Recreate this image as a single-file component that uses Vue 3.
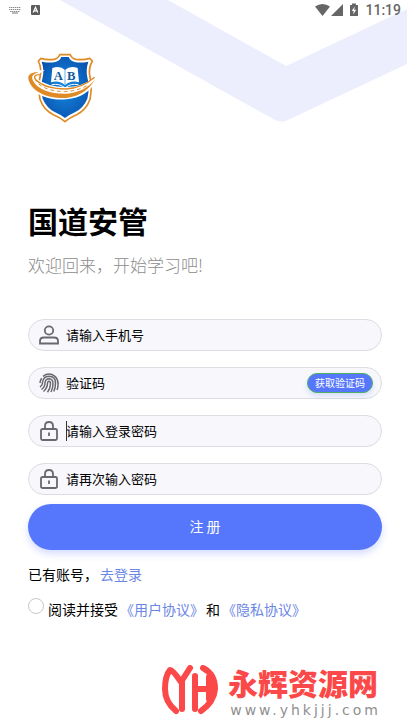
<template>
  <div class="page">
    <svg class="backdrop" viewBox="0 0 407 124" aria-hidden="true">
      <path d="M60 0H168L286 66L407 9V64L288 120Q282 123 275 120Z" fill="#eceefe" />
    </svg>

    <header class="status-bar">
      <div class="status-group">
        <svg width="12" height="8" viewBox="0 0 12 8" aria-hidden="true">
          <path d="M0 1.500H12M0 3.500H12M1 5.500H11" stroke="#888" stroke-width="1" stroke-dasharray="1.4 .6" />
          <path d="M3 7H9" stroke="#777" />
        </svg>
        <svg width="9" height="10" viewBox="0 0 9 10" aria-hidden="true">
          <rect width="9" height="10" rx="1" fill="#5c5c5c" />
          <path d="M2.2 7.5L4.5 2.2L6.8 7.5M3 5.8H6" fill="none" stroke="#fff" stroke-width="1.2" />
        </svg>
      </div>
      <div class="status-group status-right">
        <svg width="44" height="14" viewBox="0 0 44 14" aria-hidden="true">
          <path d="M0 3.500Q7.500 -1.500 15 3.500L7.500 13Z" fill="#666" />
          <path d="M28 1V13H16Z" fill="#666" />
          <path d="M37 .5H41V2H43V13H35V2H37Z" fill="#666" />
          <path d="M39.600 3.500L36.800 8H38.700L38.200 11.500L41.200 6.800H39.200Z" fill="#fff" />
        </svg>
        <time class="clock">11:19</time>
      </div>
    </header>

    <main class="content">
      <svg class="logo" viewBox="24 15 204 210" role="img" aria-label="国道安管">
        <defs>
          <radialGradient id="shieldFill" cx="50%" cy="50%" r="60%">
            <stop offset="0" stop-color="#1389e0" />
            <stop offset="1" stop-color="#0a52ae" />
          </radialGradient>
        </defs>
        <path
          d="M119 20H151Q155 31 168 34Q190 37 209 31L217 39Q204 62 210 88Q217 112 210 154Q199 186 170 200Q148 209 135 221Q122 209 100 200Q71 186 60 154Q53 112 60 88Q66 62 55 39L63 31Q82 37 102 34Q115 31 119 20Z"
          fill="#fff"
          stroke="#df8a25"
          stroke-width="5"
          stroke-linejoin="round"
        />
        <path
          d="M124 27H146Q151 40 167 43Q187 45 205 41Q197 65 202 88Q210 118 202 152Q190 180 166 192Q148 200 135 210Q122 200 104 192Q80 180 68 152Q60 118 68 88Q73 65 65 41Q85 45 103 43Q119 40 124 27Z"
          fill="url(#shieldFill)"
        />
        <path
          d="M135 66Q120 51 97 60L93 103Q119 96 135 112Q151 96 177 103L173 60Q150 51 135 66Z"
          fill="#fff"
        />
        <path
          d="M135 66V111M93 106Q119 100 133 115M177 106Q151 100 137 115"
          fill="none"
          stroke="#2385ce"
          stroke-width="2"
        />
        <path d="M95 110Q119 106 132 118M175 110Q151 106 138 118" fill="none" stroke="#fff" stroke-width="3" />
        <text class="logo-letter" x="115" y="95">A</text>
        <text class="logo-letter" x="154" y="95">B</text>
        <path
          d="M56 72C32 72 22 82 28 100C39 137 93 153 139 149C184 145 211 122 225 94C199 113 174 122 139 122C91 123 64 108 48 96Q37 83 56 72Z"
          fill="#fff"
          stroke="#fff"
          stroke-width="10"
        />
        <path
          d="M56 73C30 71 20 83 27 100C41 137 93 153 139 150C181 146 211 121 225 94C207 119 174 136 139 137C92 138 58 125 43 104C30 87 38 78 56 73Z"
          fill="#df8a25"
        />
        <path
          d="M59 80Q35 80 49 97Q76 123 137 123Q184 122 224 88"
          fill="none"
          stroke="#df8a25"
          stroke-width="4"
        />
        <path
          d="M45 91Q60 128 134 131Q176 129 207 109"
          fill="none"
          stroke="#df8a25"
          stroke-width="3"
          stroke-dasharray="11 9"
        />
      </svg>

      <h1 class="title">国道安管</h1>
      <p class="subtitle">欢迎回来，开始学习吧!</p>

      <form class="form" @submit.prevent>
        <div v-for="field in fields" :key="field.id" class="field">
          <label class="field-icon" :for="field.id" :aria-label="field.label">
            <svg v-if="field.icon === 'user'" width="20" height="20" viewBox="0 0 20 20">
              <circle cx="10" cy="5.500" r="4.200" />
              <path d="M1 18.500V16Q1 12.500 5 12.500H15Q19 12.500 19 16V18.500Z" />
            </svg>
            <svg v-else-if="field.icon === 'finger'" class="finger" width="20" height="20" viewBox="0 0 20 20">
              <path d="M4 3.300Q10-1.200 16 3.300Q19.500 7 19 12Q19 15 18 17" />
              <path d="M1 10Q1.300 7 2.600 5.200M1 14Q3.500 12.500 3.500 9.500Q4 3.500 10 3.300Q16.500 3.500 16.500 10Q16.500 15 14.800 18.500" />
              <path d="M2.500 16.500Q6 14 6 9.500Q6.500 6 10 5.800Q14 6 14 10.500Q14 15 12 19" />
              <path d="M4.500 18.500Q8.500 15 8.500 10Q8.700 8.300 10 8.300Q11.500 8.500 11.500 11Q11.300 15.500 8.500 19.300" />
            </svg>
            <svg v-else width="20" height="20" viewBox="0 0 20 20">
              <rect x="2" y="8" width="16" height="11" rx="1.500" />
              <path d="M6 8V5Q6 1 10 1Q14 1 14 5V8M10 11.500V15" />
            </svg>
          </label>
          <div class="input-wrap">
            <input
              :id="field.id"
              v-model="form[field.id]"
              class="field-input"
              :type="field.type"
              :placeholder="field.label"
            />
            <span v-if="field.id === active" class="caret"></span>
          </div>
          <button v-if="field.icon === 'finger'" type="button" class="code-btn">获取验证码</button>
        </div>

        <button type="submit" class="submit-btn">注 册</button>
      </form>

      <p class="row login-row">
        <span>已有账号，</span>
        <a href="#login">去登录</a>
      </p>

      <div class="row agree-row">
        <input id="agree" v-model="agreed" class="agree-radio" type="checkbox" />
        <label for="agree">阅读并接受</label>
        <a href="#terms">《用户协议》</a>
        <span>和</span>
        <a href="#privacy">《隐私协议》</a>
      </div>
    </main>

    <footer class="brand">
      <svg width="56" height="50" viewBox="0 0 56 50" aria-hidden="true">
        <g fill="none" stroke="#fb4848" stroke-width="6" stroke-linecap="round" stroke-linejoin="round">
          <path d="M14 46Q3 37 3 24Q3 11 8 5Q11 5 19 17L28 3" />
          <path d="M20 17V44" />
          <path d="M33 11V44M33 24H47M47 12V34" />
          <path d="M41 3Q53 9 53 24Q52 37 39 46" />
        </g>
      </svg>
      <div class="brand-text">
        <strong class="brand-name">永辉资源网</strong>
        <span class="brand-url">www.yhkjjj.com</span>
      </div>
    </footer>
  </div>
</template>

<script setup>
import { reactive, ref } from 'vue'

const fields = [
  { id: 'phone', label: '请输入手机号', type: 'tel', icon: 'user' },
  { id: 'code', label: '验证码', type: 'text', icon: 'finger' },
  { id: 'password', label: '请输入登录密码', type: 'password', icon: 'lock' },
  { id: 'confirm', label: '请再次输入密码', type: 'password', icon: 'lock' }
]

const form = reactive({ phone: '', code: '', password: '', confirm: '' })
const active = ref('password')
const agreed = ref(false)
</script>

<style>
body {
  margin: 0;
  background: #fff;
}
</style>

<style scoped>
.page {
  position: relative;
  display: flex;
  flex-direction: column;
  min-height: 100vh;
  box-sizing: border-box;
  font-family: "Noto Sans CJK SC", sans-serif;
  color: #000;
}

.backdrop {
  position: absolute;
  top: 0;
  left: 0;
  width: 100%;
}

.status-bar {
  position: relative;
  display: flex;
  justify-content: space-between;
  align-items: center;
  height: 20px;
  padding: 0 6px 0 9px;
}

.status-group {
  display: flex;
  align-items: center;
  gap: 10px;
}

.status-right {
  gap: 6px;
}

.clock {
  font: 500 14px/20px Roboto, sans-serif;
  color: #666;
}

.content {
  position: relative;
  padding: 33px 25px 0 28px;
}

.logo {
  display: block;
  width: 68px;
  height: 70px;
}

.logo-letter {
  font: bold 38px "Liberation Serif", serif;
  fill: #145a9c;
  text-anchor: middle;
}

.title {
  margin: 75px 0 0;
  font-size: 30px;
  line-height: 44px;
  font-weight: 700;
}

.subtitle {
  margin: 11px 0 0;
  font-size: 17px;
  line-height: 24px;
  font-weight: 300;
  color: #8c8c8c;
}

.form {
  display: flex;
  flex-direction: column;
  gap: 16px;
  margin-top: 42px;
}

.field {
  display: flex;
  align-items: center;
  height: 32px;
  box-sizing: border-box;
  padding: 0 8px 0 10px;
  background: #f7f7fc;
  border: 1px solid #dcdce2;
  border-radius: 16px;
}

.field-icon {
  display: flex;
  margin-right: 7px;
}

.field-icon svg {
  fill: none;
  stroke: #68686e;
  stroke-width: 1.8;
}

.field-icon .finger {
  stroke-width: 1.5;
}

.input-wrap {
  position: relative;
  display: flex;
  flex: 1;
  min-width: 0;
}

.field-input {
  width: 100%;
  padding: 0;
  border: none;
  outline: none;
  background: transparent;
  font-family: inherit;
  font-size: 13px;
  line-height: 20px;
  color: #000;
}

.field-input::placeholder {
  color: #000;
  opacity: 1;
}

.caret {
  position: absolute;
  left: 0;
  top: 0;
  width: 1px;
  height: 100%;
  background: #333;
}

.code-btn {
  height: 20px;
  padding: 0 7px;
  border: 1px solid #4caf64;
  border-radius: 10px;
  background: #5677fc;
  box-shadow: 0 3px 5px rgba(86, 119, 252, 0.2);
  font-family: inherit;
  font-size: 10px;
  line-height: 18px;
  color: #fff;
}

.submit-btn {
  height: 46px;
  margin-top: -7px;
  padding: 0 0 2px;
  border: none;
  border-radius: 23px;
  background: #5677fc;
  box-shadow: 0 4px 7px rgba(86, 119, 252, 0.25);
  font-family: inherit;
  font-size: 14px;
  color: #fff;
}

.row {
  display: flex;
  align-items: center;
  gap: 2px;
  font-size: 14px;
  line-height: 20px;
}

.row a {
  color: #6a86e4;
  text-decoration: none;
}

.login-row {
  margin: 14px 0 0;
}

.agree-row {
  margin-top: 14px;
}

.agree-radio {
  appearance: none;
  width: 16px;
  height: 16px;
  margin: 0 2px 6px 0;
  border: 1px solid #c8c8c8;
  border-radius: 50%;
  background: #fff;
}

.agree-radio:checked {
  background: #5677fc;
}

.brand {
  display: flex;
  align-items: center;
  justify-content: flex-end;
  gap: 10px;
  margin-top: auto;
  padding: 0 26px 6px 0;
}

.brand-text {
  display: flex;
  flex-direction: column;
  align-items: flex-end;
}

.brand-name {
  margin-right: 3px;
  font-size: 30px;
  line-height: 40px;
  font-weight: 900;
  color: #fb4848;
}

.brand-url {
  font-family: "DejaVu Sans", sans-serif;
  font-size: 14px;
  line-height: 16px;
  letter-spacing: 3px;
  color: #909090;
}
</style>
